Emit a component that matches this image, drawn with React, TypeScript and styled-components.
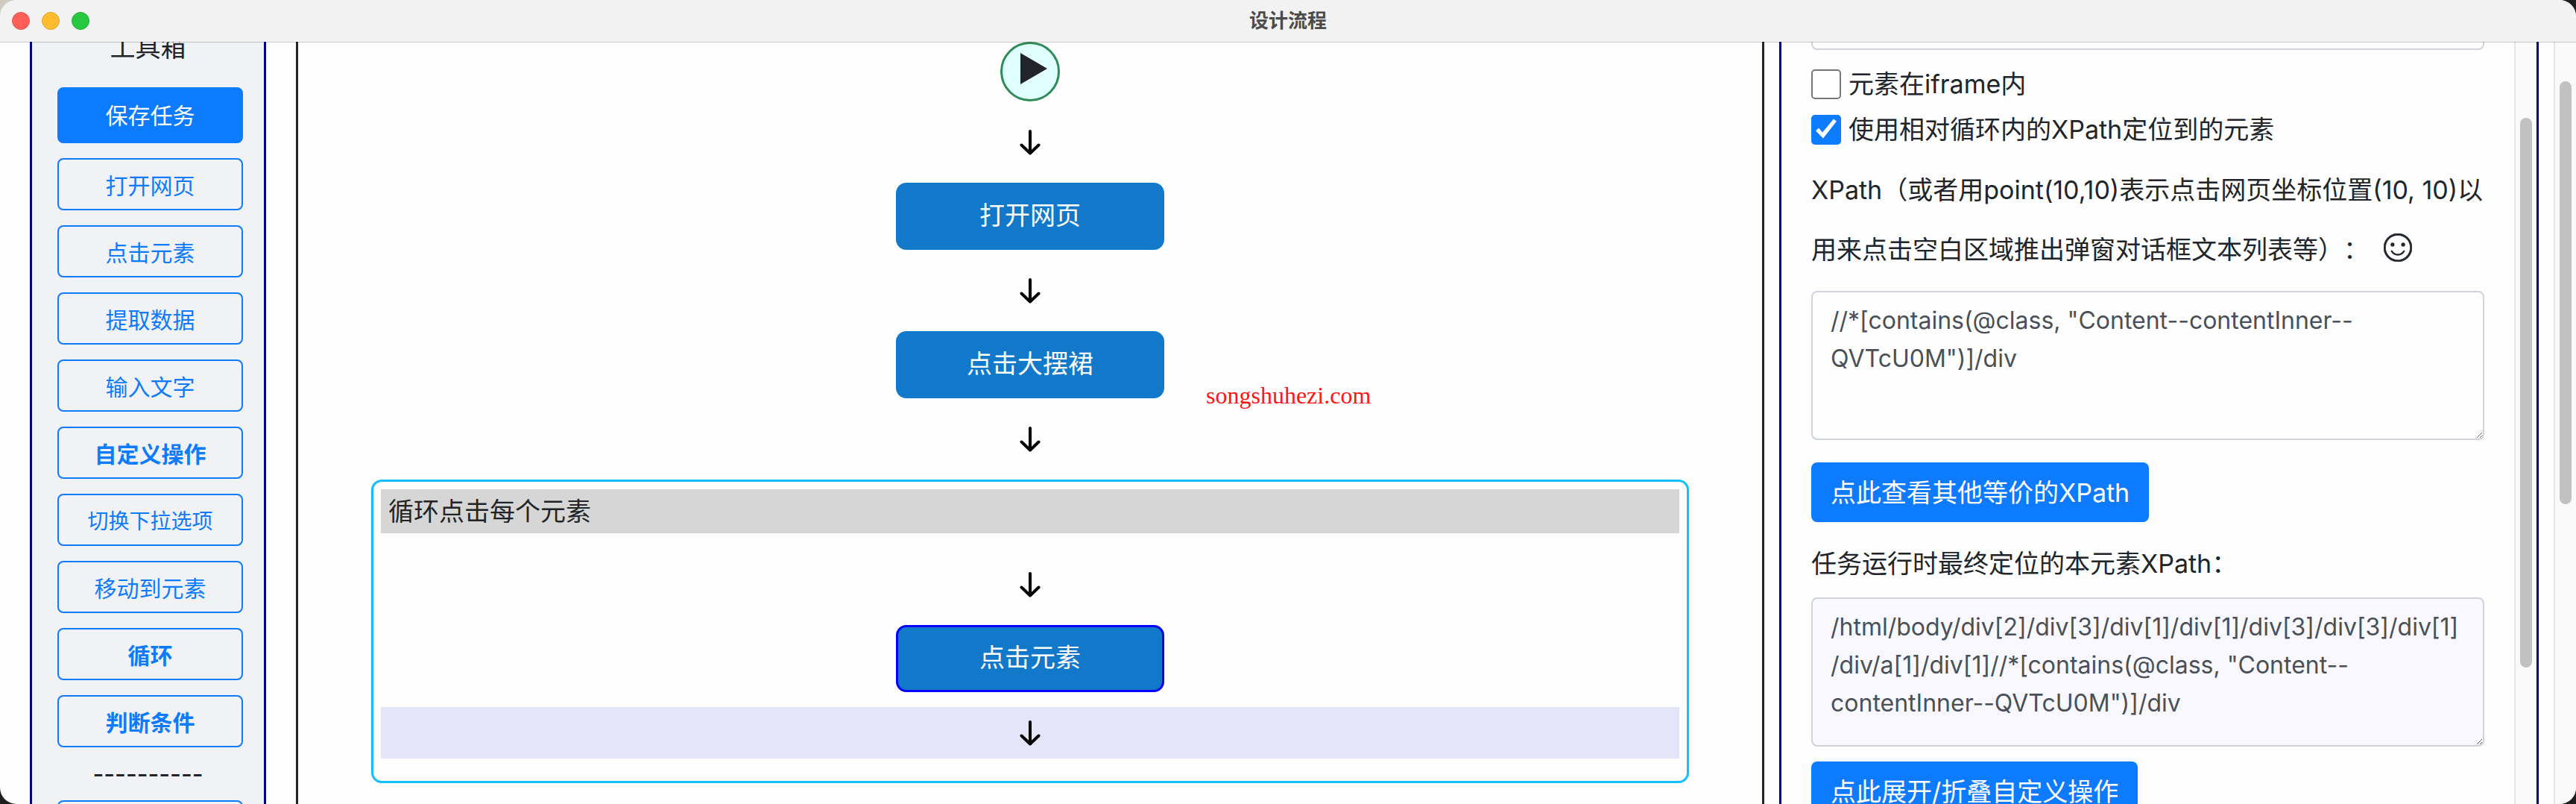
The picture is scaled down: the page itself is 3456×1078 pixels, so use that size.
import React from 'react';
import styled, { createGlobalStyle, css } from 'styled-components';

const GlobalStyle = createGlobalStyle`
  *, *::before, *::after { box-sizing: border-box; }
  body {
    margin: 0;
    background: radial-gradient(circle at 0 0, #cfcbc3 0 40px, transparent 40px), #1e1e1e;
    color: #212529;
    font-family: Inter, "Noto Sans CJK SC", sans-serif;
    font-size: 34px;
    line-height: 51px;
    text-spacing-trim: space-all;
  }
  button, input, textarea { font: inherit; margin: 0; }
`;

const Window = styled.div`
  display: flex;
  flex-direction: column;
  height: 100vh;
  overflow: hidden;
  background: #fefefe;
  border-radius: 22px;
`;

const TitleBar = styled.header`
  position: relative;
  z-index: 1;
  flex: none;
  display: grid;
  grid-template-columns: 1fr auto 1fr;
  align-items: center;
  height: 56px;
  padding: 0 16px;
  background: #f2f2f2;
  box-shadow: 0 1px 0 rgba(0, 0, 0, 0.2);
`;

const Lights = styled.div`
  display: flex;
  gap: 16px;
`;

const Light = styled.button<{ $fill: string; $edge: string }>`
  width: 24px;
  height: 24px;
  padding: 0;
  border: 1px solid ${p => p.$edge};
  border-radius: 50%;
  background: ${p => p.$fill};
`;

const Title = styled.h1`
  margin: 0;
  font-size: 26px;
  line-height: 40px;
  font-weight: 600;
  color: #4b4b4b;
`;

const Body = styled.div`
  flex: 1;
  min-height: 0;
  display: flex;
  overflow: hidden;
  padding-left: 40px;
`;

const Toolbox = styled.aside`
  flex: 0 0 317px;
  overflow: hidden;
  padding: 0 28px;
  border: solid #00008b;
  border-width: 0 3px;
  background: #f1f2f5;
`;

const ToolboxScroll = styled.div`
  margin-top: -18px;
  text-align: center;
`;

const ToolboxTitle = styled.h2`
  margin: 0 0 28px;
  font-size: 34px;
  line-height: 51px;
  font-weight: 400;
`;

const ToolList = styled.div`
  display: flex;
  flex-direction: column;
  gap: 20px;
  padding-left: 6px;
`;

const Tool = styled.button<{ $bold?: boolean; $small?: boolean }>`
  height: 70px;
  padding: 4px 0 0;
  border: 2px solid #0d7bff;
  border-radius: 8px;
  background: transparent;
  color: #0d7bff;
  font-size: ${p => (p.$small ? 28 : 30)}px;
  line-height: 45px;
  font-weight: ${p => (p.$bold ? 700 : 400)};
`;

const SaveTool = styled(Tool)`
  height: 75px;
  padding-top: 2px;
  background: #0d7bff;
  color: #fff;
`;

const Dashes = styled.div`
  margin-right: 6px;
  font-size: 32px;
  font-weight: 500;
  line-height: 31px;
`;

const Canvas = styled.main`
  flex: 1;
  min-width: 0;
  display: flex;
  flex-direction: column;
  align-items: center;
  overflow: hidden;
  margin: 0 20px 0 40px;
  padding: 0 98px;
  border: solid #212529;
  border-width: 0 3px;
`;

const Start = styled.div`
  flex: none;
  display: flex;
  justify-content: center;
  width: 80px;
  height: 80px;
  padding: 12px 0 0 10px;
  border: 3px solid #2e8b57;
  border-radius: 50%;
  background: #e0ffff;
`;

const Connector = styled.div<{ $height: number; $tint?: boolean }>`
  flex: none;
  display: flex;
  align-items: center;
  justify-content: center;
  width: 100%;
  height: ${p => p.$height}px;
  ${p => p.$tint && css`background: #e5e5f9;`}
`;

const Step = styled.button<{ $selected?: boolean }>`
  flex: none;
  width: 360px;
  height: 90px;
  padding: 0 0 4px;
  border: 3px solid ${p => (p.$selected ? '#0000ff' : '#1279ca')};
  border-radius: 14px;
  background: #1279ca;
  color: #fff;
  line-height: 51px;
`;

const StepAnchor = styled.div`
  position: relative;
  flex: none;
  display: flex;
`;

const SiteMark = styled.span`
  position: absolute;
  left: 416px;
  top: 68px;
  color: #ff1414;
  font-family: "Liberation Serif", serif;
  font-size: 32px;
  line-height: 36px;
`;

const Loop = styled.section`
  flex: none;
  display: flex;
  flex-direction: column;
  align-items: center;
  width: 100%;
  padding: 10px 10px 30px;
  border: 3px solid #12bfff;
  border-radius: 14px;
`;

const LoopTitle = styled.div`
  width: 100%;
  height: 59px;
  margin-bottom: 14px;
  padding: 0 10px;
  background: #d6d6d6;
  line-height: 59px;
`;

const LoopStep = styled(Step)`
  margin-bottom: 20px;
`;

const Inspector = styled.aside`
  flex: 0 0 1019px;
  display: flex;
  overflow: hidden;
  margin-right: 20px;
  border: solid #00008b;
  border-width: 0 3px;
`;

const Form = styled.form`
  flex: 1;
  min-width: 0;
  display: flex;
  flex-direction: column;
  align-items: flex-start;
  margin-top: -65px;
  padding: 0 40px;
`;

const fieldStyle = css`
  display: block;
  flex: none;
  width: 100%;
  padding: 12px 24px;
  border: 2px solid #ced4da;
  border-radius: 8px;
  background: #fefefe;
  color: #495057;
`;

const Field = styled.input`
  ${fieldStyle}
  height: 76px;
  margin-bottom: 15px;
`;

const Area = styled.textarea<{ $tint?: boolean }>`
  ${fieldStyle}
  height: 200px;
  font-size: 32px;
  line-height: 51px;
  resize: vertical;
  ${p => p.$tint && css`background: #f8f8fe;`}
`;

const CheckRow = styled.label`
  flex: none;
  display: flex;
  align-items: center;
  gap: 10px;
  height: 61px;
  white-space: nowrap;
`;

const Check = styled.input`
  appearance: none;
  flex: none;
  width: 40px;
  height: 40px;
  border: 2px solid #767676;
  border-radius: 5px;
  background: #fff;
  &:checked {
    border: 0;
    background: #0d7bff;
  }
  &:checked::after {
    content: "";
    display: block;
    width: 40px;
    height: 40px;
    background: #fff;
    clip-path: polygon(6px 22px, 10px 18px, 15px 24px, 30px 6px, 34px 9px, 16px 32px);
  }
`;

const Caption = styled.label`
  flex: none;
  padding: 11px 0 15px;
  line-height: 80px;
`;

const ResultCaption = styled.label`
  flex: none;
  margin: 30px 0 20px;
  line-height: 51px;
`;

const Action = styled.button`
  flex: none;
  height: 80px;
  padding: 0 26px;
  border: 0;
  border-radius: 8px;
  background: #0d7bff;
  color: #fff;
`;

const XPathAction = styled(Action)`
  margin-top: 30px;
`;

const FoldAction = styled(Action)`
  margin-top: 20px;
`;

const Smile = styled.svg`
  width: 38px;
  height: 38px;
  margin-left: 20px;
  vertical-align: -4px;
`;

const Track = styled.div<{ $start: number }>`
  flex: none;
  width: 30px;
  padding: ${p => p.$start}px 6px 0;
  border-left: 2px solid #e6e6e6;
  background: #fafafa;
`;

const Thumb = styled.div<{ $length: number }>`
  width: 16px;
  height: ${p => p.$length}px;
  border-radius: 8px;
  background: #c1c1c1;
`;

const Arrow = () => (
  <svg width="28" height="34" viewBox="0 0 28 34" fill="none" stroke="#000" strokeWidth="4" strokeLinecap="round" strokeLinejoin="round" aria-hidden="true">
    <path d="M14 2V31M2.5 20.5L14 31.5L25.5 20.5" />
  </svg>
);

const tools: { name: string; bold?: boolean; small?: boolean }[] = [
  { name: '打开网页' },
  { name: '点击元素' },
  { name: '提取数据' },
  { name: '输入文字' },
  { name: '自定义操作', bold: true },
  { name: '切换下拉选项', small: true },
  { name: '移动到元素' },
  { name: '循环', bold: true },
  { name: '判断条件', bold: true },
];

export default function App() {
  return (
    <>
      <GlobalStyle />
      <Window>
        <TitleBar>
          <Lights>
            <Light aria-label="关闭" $fill="#ff5f57" $edge="#e2554e" />
            <Light aria-label="最小化" $fill="#febc2e" $edge="#e0a22a" />
            <Light aria-label="缩放" $fill="#28c840" $edge="#24ad38" />
          </Lights>
          <Title>设计流程</Title>
        </TitleBar>
        <Body>
          <Toolbox>
            <ToolboxScroll>
              <ToolboxTitle>工具箱</ToolboxTitle>
              <ToolList>
                <SaveTool>保存任务</SaveTool>
                {tools.map(t => (
                  <Tool key={t.name} $bold={t.bold} $small={t.small}>{t.name}</Tool>
                ))}
                <Dashes>----------</Dashes>
                <Tool aria-label="更多" />
              </ToolList>
            </ToolboxScroll>
          </Toolbox>

          <Canvas>
            <Start>
              <svg width="36" height="42" viewBox="0 0 36 42" aria-hidden="true">
                <path d="M0 0L36 21L0 42Z" fill="#212529" />
              </svg>
            </Start>
            <Connector $height={109}><Arrow /></Connector>
            <Step>打开网页</Step>
            <Connector $height={109}><Arrow /></Connector>
            <StepAnchor>
              <Step>点击大摆裙</Step>
              <SiteMark>songshuhezi.com</SiteMark>
            </StepAnchor>
            <Connector $height={109}><Arrow /></Connector>
            <Loop>
              <LoopTitle>循环点击每个元素</LoopTitle>
              <Connector $height={109}><Arrow /></Connector>
              <LoopStep $selected>点击元素</LoopStep>
              <Connector $height={69} $tint><Arrow /></Connector>
            </Loop>
          </Canvas>

          <Inspector>
            <Form>
              <Field type="text" aria-label="参数" />
              <CheckRow>
                <Check type="checkbox" />
                元素在iframe内
              </CheckRow>
              <CheckRow>
                <Check type="checkbox" defaultChecked />
                使用相对循环内的XPath定位到的元素
              </CheckRow>
              <Caption htmlFor="xpath">
                XPath（或者用point(10,10)表示点击网页坐标位置(10, 10)以用来点击空白区域推出弹窗对话框文本列表等）：
                <Smile viewBox="0 0 16 16" fill="#212529" aria-hidden="true">
                  <path d="M8 15A7 7 0 1 1 8 1a7 7 0 0 1 0 14m0 1A8 8 0 1 0 8 0a8 8 0 0 0 0 16" stroke="#212529" strokeWidth="0.3" />
                  <path d="M4.285 9.567a.5.5 0 0 1 .683.183A3.5 3.5 0 0 0 8 11.5a3.5 3.5 0 0 0 3.032-1.75.5.5 0 1 1 .866.5A4.5 4.5 0 0 1 8 12.5a4.5 4.5 0 0 1-3.898-2.25.5.5 0 0 1 .183-.683" />
                  <circle cx="5" cy="6.3" r="1.1" />
                  <circle cx="11" cy="6.3" r="1.1" />
                </Smile>
              </Caption>
              <Area id="xpath" defaultValue={'//*[contains(@class, "Content--contentInner--QVTcU0M")]/div'} spellCheck={false} />
              <XPathAction type="button">点此查看其他等价的XPath</XPathAction>
              <ResultCaption htmlFor="final-xpath">任务运行时最终定位的本元素XPath：</ResultCaption>
              <Area
                id="final-xpath"
                $tint
                readOnly
                spellCheck={false}
                value={'/html/body/div[2]/div[3]/div[1]/div[1]/div[3]/div[3]/div[1]/div/a[1]/div[1]//*[contains(@class, "Content--contentInner--QVTcU0M")]/div'}
              />
              <FoldAction type="button">点此展开/折叠自定义操作</FoldAction>
            </Form>
            <Track $start={102}><Thumb $length={737} /></Track>
          </Inspector>
          <Track $start={53}><Thumb $length={567} /></Track>
        </Body>
      </Window>
    </>
  );
}
